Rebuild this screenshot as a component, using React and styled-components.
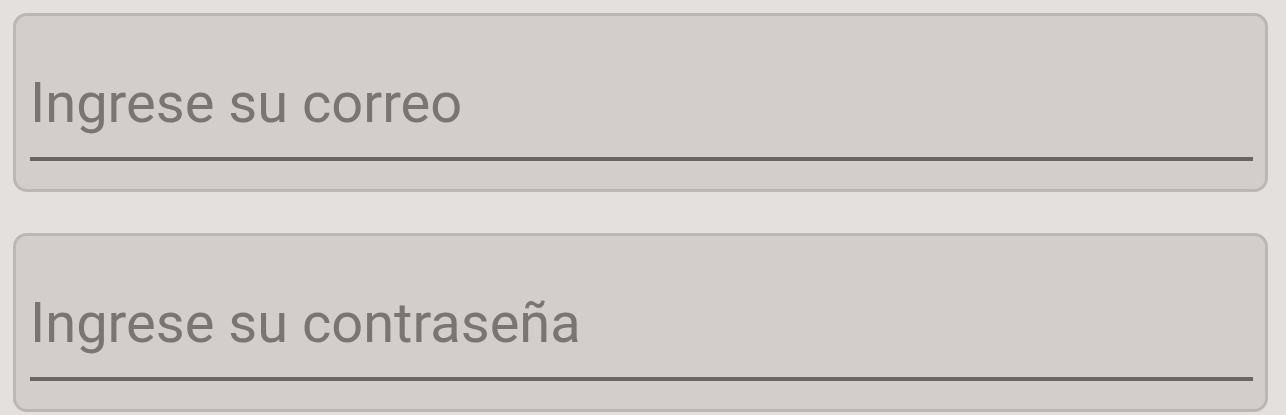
import React from "react";
import styled, { createGlobalStyle } from "styled-components";

const Global = createGlobalStyle`
  html, body {
    margin: 0;
    padding: 0;
    background: #e4e0dd;
    font-family: Roboto, "Noto Sans", sans-serif;
  }
`;

const Form = styled.form`
  display: flex;
  flex-direction: column;
  gap: 41px;
  padding: 13px 18px 0 13px;
`;

const Field = styled.label`
  box-sizing: border-box;
  display: flex;
  flex-direction: column;
  justify-content: flex-end;
  height: 179px;
  padding: 0 12px 28px 14px;
  background: #d3cecb;
  border: 3px solid #bcb7b4;
  border-radius: 14px;
`;

const Input = styled.input`
  box-sizing: content-box;
  display: block;
  width: 100%;
  height: 66px;
  margin: 0;
  padding: 0 0 21px 0;
  border: none;
  border-bottom: 4px solid #696562;
  background: transparent;
  outline: none;
  font-family: Roboto, "Noto Sans", sans-serif;
  font-size: 56px;
  line-height: 66px;
  color: #4a4644;

  &::placeholder {
    color: #7a7572;
    opacity: 1;
  }
`;

export default function App() {
  return (
    <>
      <Global />
      <Form onSubmit={(e) => e.preventDefault()}>
        <Field>
          <Input type="email" placeholder="Ingrese su correo" />
        </Field>
        <Field>
          <Input type="password" placeholder="Ingrese su contraseña" />
        </Field>
      </Form>
    </>
  );
}
